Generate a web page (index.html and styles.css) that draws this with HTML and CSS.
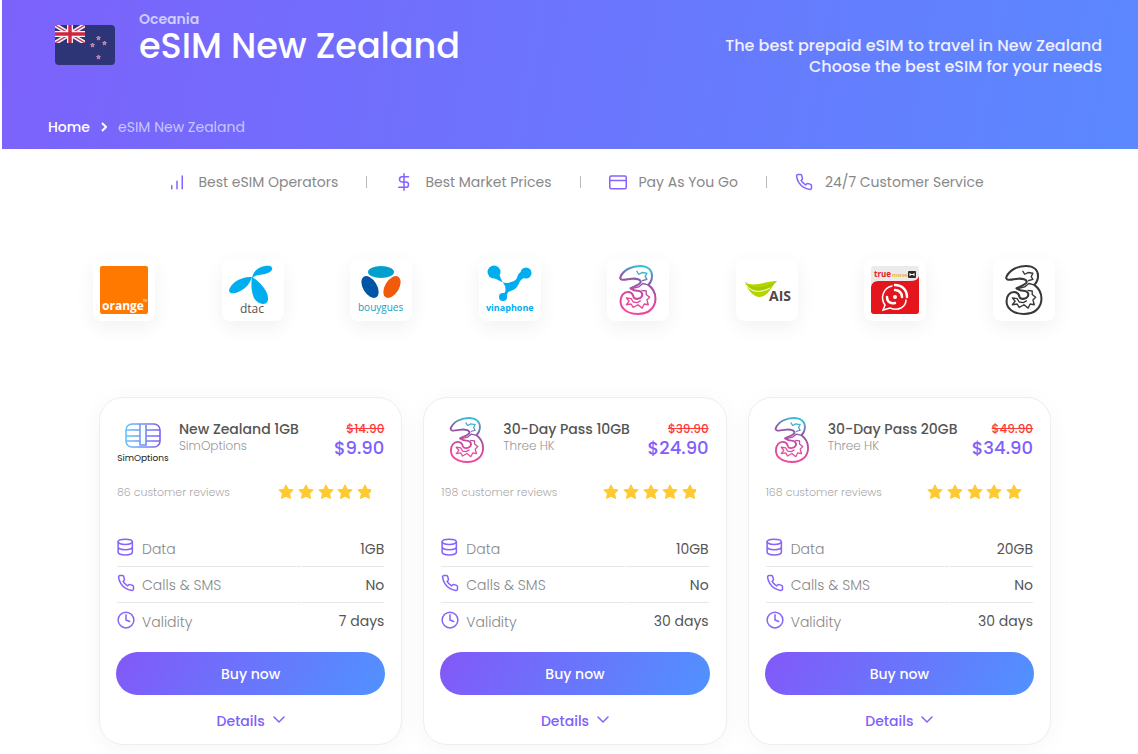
FILE: index.html
```html
<!DOCTYPE html>
<html lang="en">
<head>
<meta charset="utf-8">
<meta name="viewport" content="width=device-width, initial-scale=1">
<title>eSIM New Zealand</title>
<link rel="stylesheet" href="styles.css">
</head>
<body>
<svg class="sprite" width="0" height="0" aria-hidden="true">
  <defs>
    <linearGradient id="three-grad" x1="0.6" y1="0" x2="0.4" y2="1">
      <stop offset="0" stop-color="#35bfd6"/><stop offset="0.3" stop-color="#8a58a8"/><stop offset="0.65" stop-color="#d846a0"/><stop offset="1" stop-color="#f04a9c"/>
    </linearGradient>
    <linearGradient id="sim-grad" x1="0" y1="0" x2="1" y2="0">
      <stop offset="0" stop-color="#62c4ff"/><stop offset="1" stop-color="#8060f0"/>
    </linearGradient>
    <clipPath id="part-star"><rect x="0" y="0" width="93" height="16"/></clipPath>
    <symbol id="three" viewBox="0 0 108 146">
      <g fill="none" stroke-linejoin="round">
        <path stroke-width="6" d="M3 34C12 14 36 3 60 3C82 3 95 14 95 32C95 46 90 52 84 58C98 68 105 82 105 98C105 126 84 143 54 143C24 143 3 128 3 106C3 90 12 79 25 79C36 79 39 86 41 93C44 102 60 100 65 92C70 82 62 75 52 75C44 75 38 72 32 68C44 62 60 58 62 50C62 42 50 39 36 40C24 41 12 46 5 42C2 40 1 38 3 34Z"/>
        <path stroke-width="4" d="M50 17L56 27L66 22L80 24L75 34L80 42L66 46M84 58L68 54L56 64L36 69M64 74L78 76L78 86L88 94L80 102L84 116L72 114L66 126L54 116L40 124L34 114L20 116L28 106L20 96L34 98L40 108L52 110L62 104"/>
      </g>
    </symbol>
    <symbol id="simoptions" viewBox="0 0 36 25">
      <g fill="none" stroke="url(#sim-grad)" stroke-width="1.6">
        <rect x="1" y="1" width="34" height="23" rx="6"/>
        <path d="M1 7H15M1 13H15M1 18H15M15 1V22H21V7H35M21 13H35M21 18H35M21 7V2"/>
      </g>
    </symbol>
    <symbol id="star" viewBox="0 0 16 16">
      <path d="M8 .8l2.200 4.500 5 .7-3.600 3.500.9 5L8 12.200 3.500 14.500l.9-5L.8 6l5-.7z" fill="#ffc931" stroke="#ffc931" stroke-width="1" stroke-linejoin="round"/>
    </symbol>
    <symbol id="stars" viewBox="0 0 96 16">
      <use href="#star" x="0" width="16" height="16"/><use href="#star" x="20" width="16" height="16"/><use href="#star" x="40" width="16" height="16"/><use href="#star" x="59" width="16" height="16"/><use href="#star" x="79" width="16" height="16"/>
    </symbol>
    <symbol id="bars" viewBox="0 0 24 24"><path d="M19 21V4M12 21v-10M5 21v-4"/></symbol>
    <symbol id="dollar" viewBox="0 0 24 24"><path d="M12 1v22M18 5H9.500a3.500 3.500 0 0 0 0 7h5a3.500 3.500 0 0 1 0 7H5"/></symbol>
    <symbol id="card" viewBox="0 0 24 24"><rect x="1" y="4" width="22" height="17" rx="2"/><path d="M1 10h22"/></symbol>
    <symbol id="phone" viewBox="0 0 24 24"><path d="M22 16.920v3a2 2 0 0 1-2.180 2 19.790 19.790 0 0 1-8.630-3.070 19.500 19.500 0 0 1-6-6 19.790 19.790 0 0 1-3.070-8.670A2 2 0 0 1 4.110 2h3a2 2 0 0 1 2 1.720c.127.960.361 1.903.7 2.810a2 2 0 0 1-.45 2.110L8.090 9.910a16 16 0 0 0 6 6l1.270-1.270a2 2 0 0 1 2.110-.45c.907.339 1.850.573 2.810.7A2 2 0 0 1 22 16.920z"/></symbol>
    <symbol id="database" viewBox="0 0 24 24"><ellipse cx="11" cy="5" rx="9.500" ry="3.500"/><path d="M20.500 12c0 1.900-4.200 3.500-9.500 3.500S1.500 13.900 1.500 12M1.500 5v14c0 1.900 4.200 3.500 9.500 3.500s9.500-1.600 9.500-3.500V5"/></symbol>
    <symbol id="clock" viewBox="0 0 24 24"><circle cx="12" cy="12" r="10.500"/><path d="M12 5v7l5 2"/></symbol>
    <symbol id="chevron" viewBox="0 0 12 12"><path d="M1 3l5 5 5-5"/></symbol>
  </defs>
</svg>

<header class="hero">
  <div class="hero-top">
    <div class="hero-country">
      <svg class="flag" viewBox="0 0 60 40" role="img" aria-label="Flag of New Zealand">
        <rect width="60" height="40" rx="4" fill="#2e3577"/>
        <svg width="30" height="18" viewBox="0 0 30 18">
          <path d="M0 0L30 18M30 0L0 18" stroke="#f3f2fa" stroke-width="4.500"/>
          <path d="M0 0L30 18M30 0L0 18" stroke="#d13c55" stroke-width="1.400"/>
          <path d="M15 0V18M0 9H30" stroke="#f3f2fa" stroke-width="6"/>
          <path d="M15 0V18M0 9H30" stroke="#cf263e" stroke-width="3.400"/>
        </svg>
        <g fill="#d8607a" stroke="#c8c0dc" stroke-width=".6">
          <path id="flag-star" d="M43.500 11l.6 1.300 1.400.2-1 1 .2 1.400-1.200-.7-1.200.7.2-1.400-1-1 1.400-.2z"/>
          <use href="#flag-star" x="-6" y="7"/><use href="#flag-star" x="6" y="5"/><use href="#flag-star" y="19"/>
        </g>
      </svg>
      <div>
        <p class="region">Oceania</p>
        <h1 class="title">eSIM New Zealand</h1>
      </div>
    </div>
    <p class="tagline">The best prepaid eSIM to travel in New Zealand<br>Choose the best eSIM for your needs</p>
  </div>
  <nav class="crumbs" aria-label="Breadcrumb">
    <a class="crumb-link" href="#">Home</a>
    <svg class="crumb-arrow" viewBox="0 0 6 10" aria-hidden="true"><path d="M1 1l4 4-4 4"/></svg>
    <span class="crumb-current" aria-current="page">eSIM New Zealand</span>
  </nav>
</header>

<main>
  <ul class="features">
    <li class="feature"><svg class="icon feature-icon"><use href="#bars"/></svg>Best eSIM Operators</li>
    <li class="feature"><svg class="icon feature-icon"><use href="#dollar"/></svg>Best Market Prices</li>
    <li class="feature"><svg class="icon feature-icon"><use href="#card"/></svg>Pay As You Go</li>
    <li class="feature"><svg class="icon feature-icon"><use href="#phone"/></svg>24/7 Customer Service</li>
  </ul>

  <ul class="operators">
    <li class="operator"><svg class="logo" viewBox="0 0 50 50" role="img" aria-label="Orange">
      <rect x="1" y="1" width="48" height="48" rx="2" fill="#ff7900"/>
      <text class="brand" x="3" y="45" font-size="12" font-weight="700" fill="#fff">orange</text><text x="44" y="37" font-size="3" fill="#fff">TM</text></svg></li>
    <li class="operator"><svg class="logo" viewBox="0 0 50 50" role="img" aria-label="dtac">
      <g fill="#00aeef"><path d="M24 13C25 5 34 0 42 1C47 3 43 8 37 9C32 10 27 10 24 13Z"/><path d="M24 12C13 11 3 18 1 25C1 31 11 28 17 23C21 19 23 16 24 12Z"/><path d="M24 12C31 16 41 26 40 35C39 41 30 40 26 33C23 26 23 19 24 12Z"/></g>
      <text class="brand" x="12" y="48" font-size="12" fill="#555">dtac</text></svg></li>
    <li class="operator"><svg class="logo" viewBox="0 0 50 50" role="img" aria-label="Bouygues">
      <ellipse cx="25" cy="7" rx="13" ry="6" fill="#009fce"/><ellipse cx="14" cy="22" rx="7" ry="12" transform="rotate(-31 14 22)" fill="#0055a5"/><ellipse cx="36" cy="22" rx="7" ry="12" transform="rotate(31 36 22)" fill="#f05a0a"/>
      <text class="brand" x="2" y="46" font-size="10" fill="#14a0c4">bouygues</text></svg></li>
    <li class="operator"><svg class="logo" viewBox="0 0 50 50" role="img" aria-label="Vinaphone">
      <g fill="#00aeef"><circle cx="9" cy="7" r="6.500"/><circle cx="41" cy="8" r="5.500"/><circle cx="18" cy="32" r="4"/><path d="M4 12C11 11 17 21 26 17C34 16 31 9 36 7L44 13C34 11 35 20 30 24C26 27 21 25 22 33L15 30C21 29 21 25 20 21C17 16 14 11 13 4Z"/></g>
      <text class="brand" x="1" y="46" font-size="9" font-weight="700" fill="#00aeef">vinaphone</text></svg></li>
    <li class="operator"><svg class="logo three-color" role="img" aria-label="Three"><use href="#three"/></svg></li>
    <li class="operator"><svg class="logo" viewBox="0 0 50 50" role="img" aria-label="AIS">
      <path d="M3 17C11 23 24 16 35 16C29 21 27 32 17 32C11 31 6 26 3 17Z" fill="#b5d500"/><path d="M3 17C11 26 24 22 35 16C26 26 12 30 3 17Z" fill="#a2cc00"/><path d="M4 20C11 29 20 27 28 23" fill="none" stroke="#fff"/>
      <text class="brand" x="27" y="36" font-size="14" font-weight="700" fill="#514547">AIS</text></svg></li>
    <li class="operator"><svg class="logo" viewBox="0 0 50 50" role="img" aria-label="TrueMove H">
      <rect x="1" y="1" width="48" height="48" rx="3" fill="#eceaea"/><path d="M1 22Q2 16 8 16H40Q48 16 49 11V46Q49 49 46 49H4Q1 49 1 46Z" fill="#e4151d"/>
      <text class="brand" x="4" y="12" font-size="8" font-weight="700" fill="#e32129">true</text><text class="brand" x="22" y="12" font-size="6" font-weight="600" fill="#e8ad27">move</text><rect x="38" y="6" width="8" height="7" rx="1" fill="#302b2b"/><path d="M40 8v3M44 8v3M40 9.500h4" stroke="#fff"/>
      <g fill="none" stroke="#fff" stroke-linecap="round"><path stroke-width="1.500" d="M22 21C13 23 10 33 15 40L13 45L20 43C29 47 36 41 36 35"/><path stroke-width="2.500" d="M25 20C32 20 37 25 37 32M25 25C29 25 32 28 32 32M17 32C17 37 21 39 25 38"/></g><circle cx="25" cy="32" r="2" fill="#fff"/></svg></li>
    <li class="operator"><svg class="logo three-dark" role="img" aria-label="Three"><use href="#three"/></svg></li>
  </ul>

  <section class="plans" aria-label="Plans">
    <article class="plan">
      <div class="plan-head">
        <div class="plan-brand"><svg class="sim-logo" aria-hidden="true"><use href="#simoptions"/></svg><span class="sim-name">SimOptions</span></div>
        <div class="plan-info"><h2 class="plan-name">New Zealand 1GB</h2><p class="plan-operator">SimOptions</p></div>
        <div class="plan-prices"><del class="old-price">$14.90</del><strong class="price">$9.90</strong></div>
      </div>
      <div class="reviews"><span>86 customer reviews</span><svg class="stars" viewBox="0 0 96 16" role="img" aria-label="4.8 out of 5"><use href="#stars" clip-path="url(#part-star)"/></svg></div>
      <table class="specs">
        <tr><th scope="row"><svg class="icon"><use href="#database"/></svg>Data</th><td>1GB</td></tr>
        <tr><th scope="row"><svg class="icon"><use href="#phone"/></svg>Calls &amp; SMS</th><td>No</td></tr>
        <tr><th scope="row"><svg class="icon"><use href="#clock"/></svg>Validity</th><td>7 days</td></tr>
      </table>
      <button class="buy" type="button">Buy now</button>
      <button class="details" type="button">Details<svg class="icon chevron"><use href="#chevron"/></svg></button>
    </article>

    <article class="plan">
      <div class="plan-head">
        <div class="plan-brand"><svg class="three-logo three-color" role="img" aria-label="Three"><use href="#three"/></svg></div>
        <div class="plan-info"><h2 class="plan-name">30-Day Pass 10GB</h2><p class="plan-operator">Three HK</p></div>
        <div class="plan-prices"><del class="old-price">$39.90</del><strong class="price">$24.90</strong></div>
      </div>
      <div class="reviews"><span>198 customer reviews</span><svg class="stars" viewBox="0 0 96 16" role="img" aria-label="4.8 out of 5"><use href="#stars" clip-path="url(#part-star)"/></svg></div>
      <table class="specs">
        <tr><th scope="row"><svg class="icon"><use href="#database"/></svg>Data</th><td>10GB</td></tr>
        <tr><th scope="row"><svg class="icon"><use href="#phone"/></svg>Calls &amp; SMS</th><td>No</td></tr>
        <tr><th scope="row"><svg class="icon"><use href="#clock"/></svg>Validity</th><td>30 days</td></tr>
      </table>
      <button class="buy" type="button">Buy now</button>
      <button class="details" type="button">Details<svg class="icon chevron"><use href="#chevron"/></svg></button>
    </article>

    <article class="plan">
      <div class="plan-head">
        <div class="plan-brand"><svg class="three-logo three-color" role="img" aria-label="Three"><use href="#three"/></svg></div>
        <div class="plan-info"><h2 class="plan-name">30-Day Pass 20GB</h2><p class="plan-operator">Three HK</p></div>
        <div class="plan-prices"><del class="old-price">$49.90</del><strong class="price">$34.90</strong></div>
      </div>
      <div class="reviews"><span>168 customer reviews</span><svg class="stars" viewBox="0 0 96 16" role="img" aria-label="5 out of 5"><use href="#stars"/></svg></div>
      <table class="specs">
        <tr><th scope="row"><svg class="icon"><use href="#database"/></svg>Data</th><td>20GB</td></tr>
        <tr><th scope="row"><svg class="icon"><use href="#phone"/></svg>Calls &amp; SMS</th><td>No</td></tr>
        <tr><th scope="row"><svg class="icon"><use href="#clock"/></svg>Validity</th><td>30 days</td></tr>
      </table>
      <button class="buy" type="button">Buy now</button>
      <button class="details" type="button">Details<svg class="icon chevron"><use href="#chevron"/></svg></button>
    </article>
  </section>
</main>
</body>
</html>
```
FILE: styles.css
```css
* { box-sizing: border-box; }
body { margin: 0; padding-left: 2px; background: #fff; color: #555; font: 14px/20px Poppins, Inter, sans-serif; }
h1, h2, p, ul { margin: 0; padding: 0; }
ul { list-style: none; }
svg { display: block; flex: none; }
button { border: 0; padding: 0; font: inherit; cursor: pointer; }
.sprite { position: absolute; }

.hero { padding: 9px 36px 12px 46px; background: linear-gradient(100deg, #7c62fb, #5b88ff); color: #fff; }
.hero-top { display: flex; justify-content: space-between; align-items: flex-start; gap: 24px; margin-bottom: 32px; padding-left: 7px; }
.hero-country { display: flex; align-items: center; gap: 24px; }
.flag { width: 60px; height: 40px; margin-top: 16px; }
.region { font-weight: 600; line-height: 18px; color: #cfccff; }
.title { font-size: 35px; font-weight: 500; line-height: 36px; }
.tagline { padding: 26px 0 8px; font-size: 16px; font-weight: 500; line-height: 21px; text-align: right; color: #eef0ff; }
.crumbs { display: flex; align-items: center; gap: 11px; }
.crumb-link { color: #fff; font-weight: 500; text-decoration: none; }
.crumb-arrow { width: 6px; height: 10px; fill: none; stroke: #fff; stroke-width: 2; }
.crumb-current { color: #c6c6ff; }

.icon { width: 18px; height: 18px; fill: none; stroke: #8663fa; stroke-width: 2; stroke-linecap: round; stroke-linejoin: round; }

.features { display: flex; justify-content: center; padding: 23px 0 0 12px; color: #888; }
.feature { display: flex; align-items: center; }
.feature + .feature::before { content: ""; width: 1px; height: 12px; margin: 0 28px; background: #bbb; }
.feature-icon { margin-right: 12px; }

.operators { display: flex; justify-content: space-between; padding: 67px 83px 0 91px; }
.operator { display: grid; place-items: center; width: 62px; height: 62px; border-radius: 8px; background: #fff; box-shadow: 0 6px 20px rgba(0, 0, 0, .06); }
.logo { width: 50px; height: 50px; overflow: visible; }
.brand { font-family: "Open Sans", sans-serif; }
.three-color { stroke: url(#three-grad); }
.three-dark { stroke: #383838; }

.plans { display: grid; grid-template-columns: repeat(3, 1fr); gap: 21px; padding: 76px 87px 24px 97px; }
.plan { padding: 18px 16px 13px; border: 1px solid #eee; border-radius: 24px; background: #fff; box-shadow: 0 4px 24px rgba(0, 0, 0, .04); }
.plan-head { display: flex; padding: 0 1px; }
.plan-brand { display: flex; flex-direction: column; align-items: center; width: 52px; height: 52px; margin-right: 10px; }
.sim-logo { width: 36px; height: 25px; margin-top: 7px; }
.sim-name { color: #222; font-size: 9px; line-height: 20px; }
.three-logo { width: 36px; height: 46px; margin-top: 1px; }
.plan-info { flex: 1; padding-top: 4px; }
.plan-name { font-size: 14px; font-weight: 500; line-height: 18px; white-space: nowrap; }
.plan-operator { color: #999; font-size: 12px; font-weight: 300; line-height: 16px; }
.plan-prices { display: flex; flex-direction: column; align-items: flex-end; padding-top: 4px; }
.old-price { color: #ff3838; font-size: 12px; font-weight: 500; line-height: 18px; }
.price { color: #8060fa; font-size: 18px; font-weight: 500; line-height: 19px; }
.reviews { display: flex; justify-content: space-between; align-items: center; margin-top: 14px; padding: 0 11px 0 1px; color: #aaa; font-size: 11px; font-weight: 300; }
.stars { width: 96px; height: 16px; }

.specs { width: 100%; margin-top: 29px; border-spacing: 1px 0; }
.specs th { width: 69%; height: 36px; padding: 0; color: #888; font-weight: 300; text-align: left; }
.specs td { height: 36px; padding: 0; color: #555; text-align: right; }
.specs .icon { display: inline-block; width: 18px; height: 18px; margin-right: 7px; vertical-align: -2px; }
.specs tr:not(:last-child) > * { border-bottom: 1px solid #e8e8e8; }
.buy { display: block; width: 100%; height: 43px; margin-top: 13px; border-radius: 22px; background: linear-gradient(120deg, #8358f8, #5092ff); color: #fff; font-weight: 500; }
.details { display: flex; align-items: center; gap: 8px; margin: 16px auto 0; background: none; color: #8060fa; font-weight: 500; }
.chevron { width: 12px; height: 12px; margin-bottom: 3px; stroke-width: 1.5; }
```
